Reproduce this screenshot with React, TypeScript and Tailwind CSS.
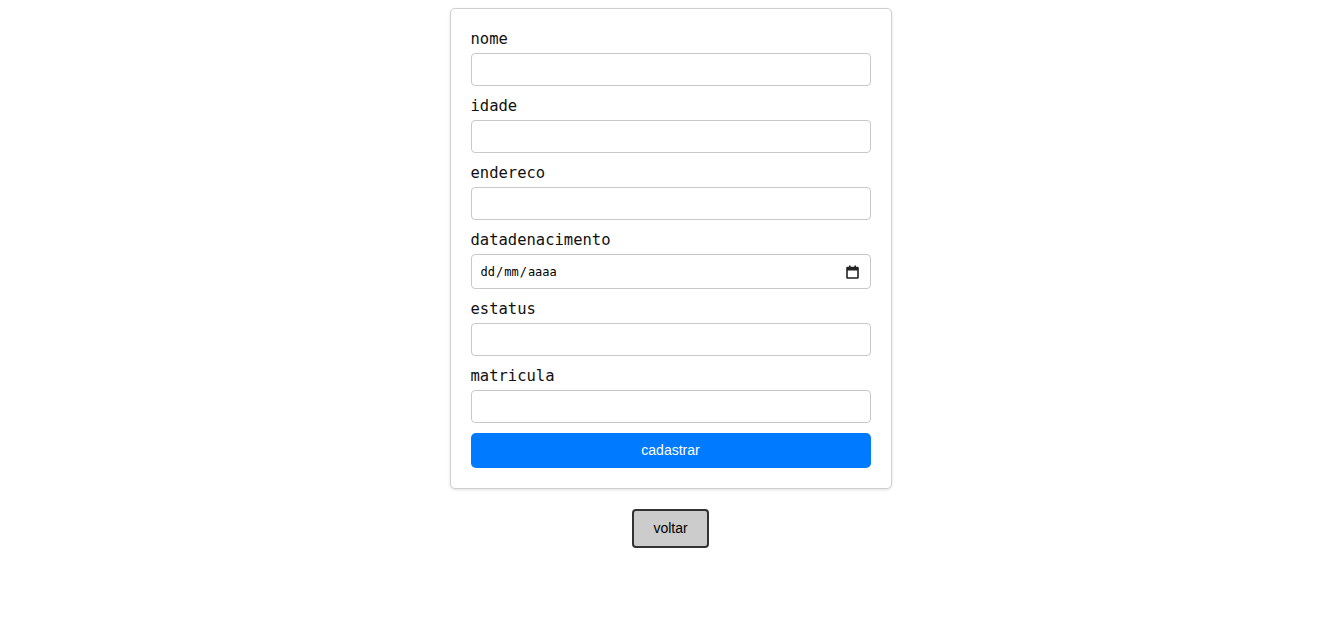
import React from "react";

const FIELDS = ["nome", "idade", "endereco", "datadenacimento", "estatus", "matricula"];

const mono = { fontFamily: '"DejaVu Sans Mono", "Liberation Mono", monospace' };

function CalendarIcon() {
  return (
    <svg width="13" height="14" viewBox="0 0 13 14" fill="none">
      <rect x="1" y="2.5" width="11" height="10.5" stroke="#222" strokeWidth="1.6" rx="0.6" />
      <rect x="1" y="2.5" width="11" height="3" fill="#222" />
      <rect x="3" y="0.5" width="1.6" height="2.5" fill="#222" />
      <rect x="8.4" y="0.5" width="1.6" height="2.5" fill="#222" />
    </svg>
  );
}

function Field({ name }: { name: string }) {
  const isDate = name === "datadenacimento";
  return (
    <div className="flex flex-col">
      <label className="h-[24px] pt-[1px] text-[15.5px] leading-[19px] text-[#111]" style={mono}>
        {name}
      </label>
      {isDate ? (
        <div className="flex h-[35px] w-[400px] items-center justify-between rounded-[4px] border border-[#c8c8c8] bg-white pl-[9px] pr-[11px]">
          <span className="flex text-[12px] text-black" style={mono}>
            <span>dd</span>
            <span className="mx-[1px]">/</span>
            <span>mm</span>
            <span className="mx-[1px]">/</span>
            <span>aaaa</span>
          </span>
          <CalendarIcon />
        </div>
      ) : (
        <input
          type="text"
          className="h-[33px] w-[400px] rounded-[4px] border border-[#c8c8c8] bg-white px-[9px] outline-none"
        />
      )}
    </div>
  );
}

export default function App() {
  return (
    <div
      className="flex min-h-screen flex-col items-center bg-white pl-[8px] pt-[8px]"
      style={{ fontFamily: '"Liberation Sans", Arial, sans-serif' }}
    >
      <form className="flex w-[442px] flex-col gap-[10px] rounded-[5px] border border-[#cfcfcf] bg-white p-[20px] shadow-[0_1px_3px_rgba(0,0,0,0.12)]">
        {FIELDS.map((f) => (
          <Field key={f} name={f} />
        ))}
        <button
          type="button"
          className="h-[35px] w-[400px] rounded-[5px] bg-[#007bff] text-[14px] text-white"
        >
          cadastrar
        </button>
      </form>
      <button
        type="button"
        className="mt-[20px] h-[39px] w-[77px] rounded-[4px] border-2 border-[#333] bg-[#cccccc] text-[14px] text-black"
      >
        voltar
      </button>
    </div>
  );
}
